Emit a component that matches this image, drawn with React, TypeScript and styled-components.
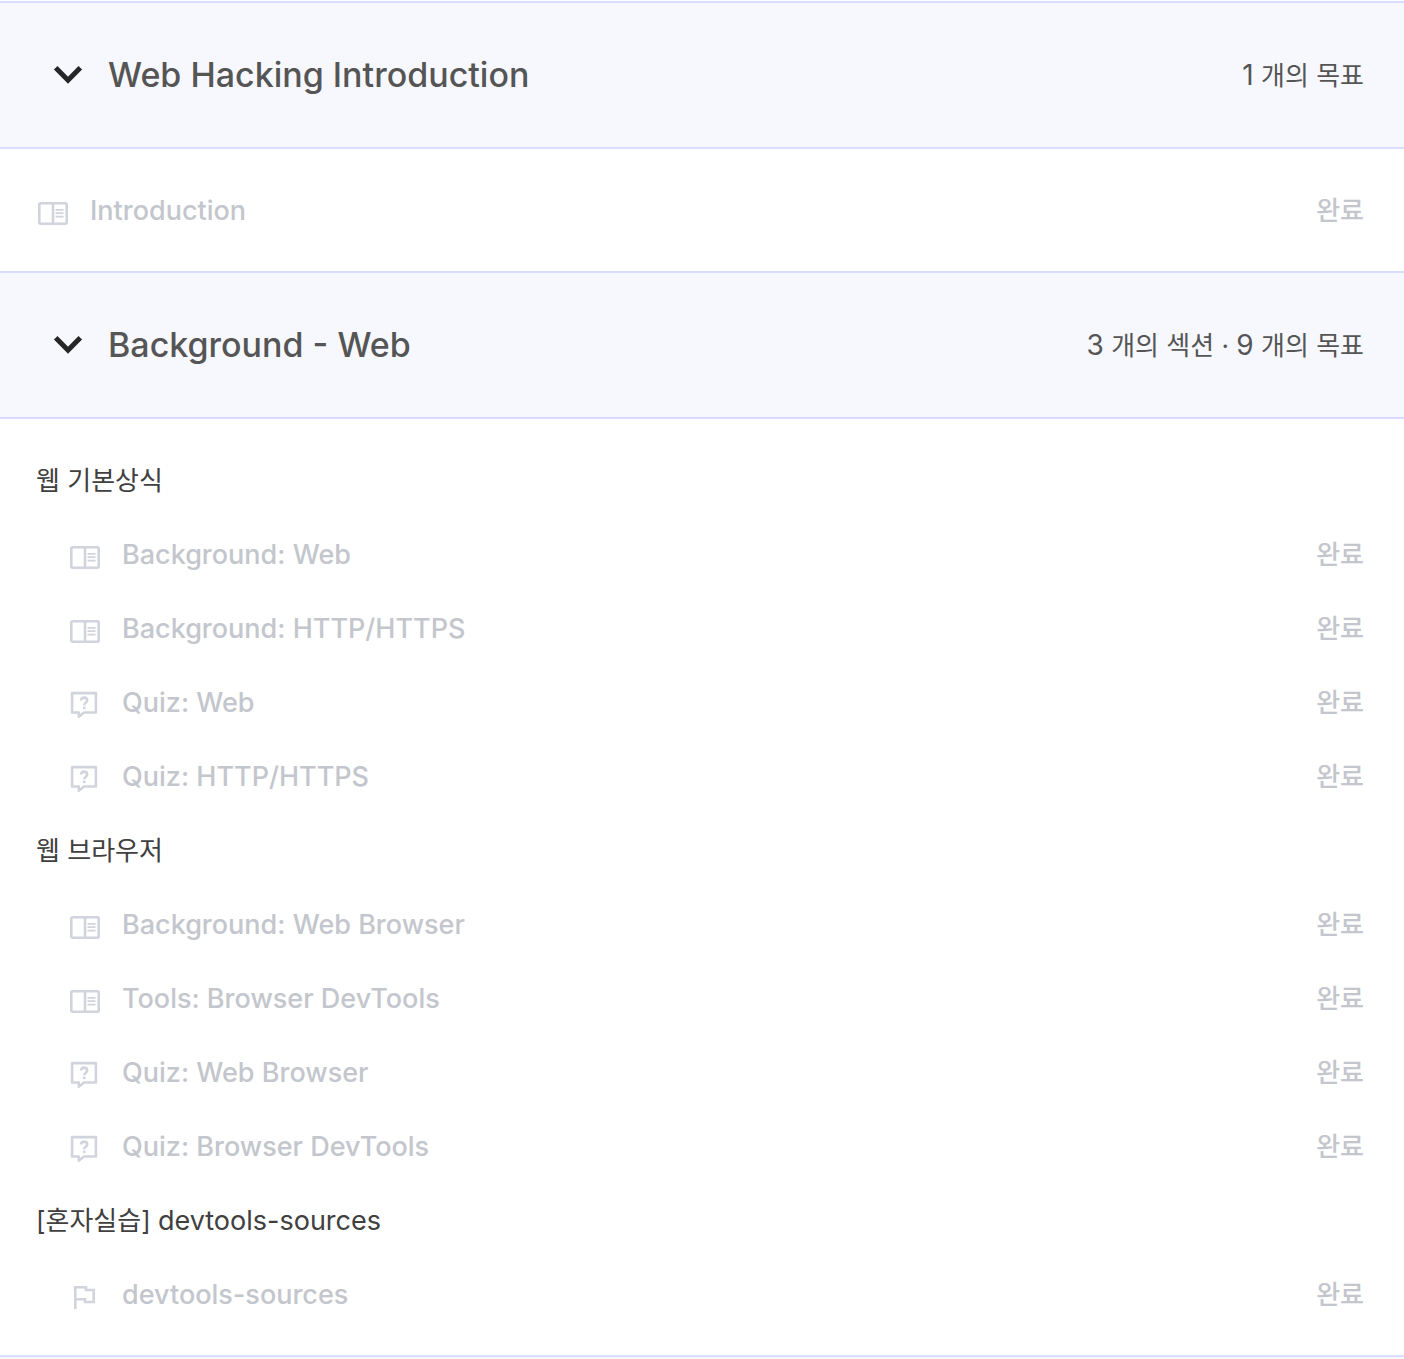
import React, { useState } from "react";
import styled, { createGlobalStyle } from "styled-components";

const GlobalStyle = createGlobalStyle`
  *, *::before, *::after { box-sizing: border-box; }
  body {
    margin: 0;
    background: #fff;
    font-family: Inter, "Noto Sans CJK KR", sans-serif;
  }
`;

const Curriculum = styled.main`
  padding-top: 1px;
`;

const Header = styled.button`
  display: flex;
  align-items: center;
  width: 100%;
  min-height: 148px;
  padding: 0 40px 0 48px;
  border: 0;
  border-top: 2px solid #d9dbff;
  border-bottom: 2px solid #d9dbff;
  background: #f7f8fe;
  color: #555;
  font-family: inherit;
  text-align: left;
  cursor: pointer;
`;

const Chevron = styled.svg<{ $open: boolean }>`
  flex: none;
  width: 40px;
  height: 40px;
  margin-right: 20px;
  transform: ${(p) => (p.$open ? "none" : "rotate(-90deg)")};
`;

const Title = styled.span`
  flex: 1;
  font-size: 34px;
  font-weight: 500;
  line-height: 44px;
`;

const Summary = styled.span`
  font-size: 26px;
  line-height: 40px;
  white-space: nowrap;
`;

const Latin = styled.span<{ $size: number }>`
  font-size: ${(p) => p.$size}px;
`;

const Body = styled.div`
  padding: 24px 40px 24px 36px;
`;

const GroupTitle = styled.h3`
  display: flex;
  align-items: center;
  height: 74px;
  margin: 0;
  padding-bottom: 4px;
  color: #404040;
  font-size: 26px;
  font-weight: 400;
  white-space: pre;
`;

const List = styled.ul<{ $nested?: boolean }>`
  margin: 0;
  padding: 0 0 0 ${(p) => (p.$nested ? 32 : 0)}px;
  list-style: none;
`;

const Row = styled.li`
  display: flex;
  align-items: center;
  justify-content: space-between;
  height: 74px;
  padding-top: 2px;
  color: #c3c6cc;
`;

const Lesson = styled.a`
  display: flex;
  align-items: center;
  gap: 22px;
  color: inherit;
  font-size: 27px;
  font-weight: 500;
  line-height: 40px;
  text-decoration: none;
`;

const Icon = styled.svg`
  flex: none;
  width: 32px;
  height: 32px;
  margin-top: 4px;
  color: #d1d4dc;
`;

const Status = styled.span`
  font-size: 26px;
  font-weight: 500;
  line-height: 40px;
`;

const NextSection = styled.div`
  height: 4px;
  border-top: 2px solid #d9dbff;
  background: #f7f8fe;
`;

type Kind = "lecture" | "quiz" | "challenge";

function KindIcon({ kind }: { kind: Kind }) {
  return (
    <Icon viewBox="0 0 32 32" fill="none" stroke="currentColor" strokeWidth="2.6" aria-hidden="true">
      {kind === "lecture" && (
        <>
          <rect x="3.3" y="6.3" width="27.4" height="20.4" rx="1.2" />
          <path d="M17 6v21" />
          <path d="M19.5 12.8h8M19.5 16.2h8M19.5 19.6h8" strokeWidth="1.8" />
        </>
      )}
      {kind === "quiz" && (
        <>
          <path d="M4.1 4.1h23.8v19.4h-11.9l-5.2 4.2v-4.2h-6.7z" strokeLinejoin="round" />
          <path d="M13 11.6c0-4 6.2-4 6.2 0 0 2.2-3 2.3-3 4.6" strokeWidth="2.6" />
          <path d="M14.9 18.9h2.6" strokeWidth="2.6" />
        </>
      )}
      {kind === "challenge" && <path d="M7.3 28V6.3h10.7v2.7h7.7v12h-8.7v-2.7H7.3" />}
    </Icon>
  );
}

interface Item { kind: Kind; name: string }
interface Group { title?: React.ReactNode; items: Item[] }

function Section({ title, summary, groups }: { title: string; summary: React.ReactNode; groups: Group[] }) {
  const [open, setOpen] = useState(true);
  return (
    <section>
      <Header type="button" aria-expanded={open} onClick={() => setOpen(!open)}>
        <Chevron $open={open} viewBox="0 0 40 40" fill="none" stroke="#262626" strokeWidth="5" aria-hidden="true">
          <path d="M7.7 12.7 20 25.2 32.3 12.7" />
        </Chevron>
        <Title>{title}</Title>
        <Summary>{summary}</Summary>
      </Header>
      {open && (
        <Body>
          {groups.map((group, i) => (
            <React.Fragment key={i}>
              {group.title && <GroupTitle>{group.title}</GroupTitle>}
              <List $nested={Boolean(group.title)}>
                {group.items.map((item) => (
                  <Row key={item.name}>
                    <Lesson href="#">
                      <KindIcon kind={item.kind} />
                      {item.name}
                    </Lesson>
                    <Status>완료</Status>
                  </Row>
                ))}
              </List>
            </React.Fragment>
          ))}
        </Body>
      )}
    </section>
  );
}

const webGroups: Group[] = [
  {
    title: "웹 기본상식",
    items: [
      { kind: "lecture", name: "Background: Web" },
      { kind: "lecture", name: "Background: HTTP/HTTPS" },
      { kind: "quiz", name: "Quiz: Web" },
      { kind: "quiz", name: "Quiz: HTTP/HTTPS" },
    ],
  },
  {
    title: "웹 브라우저",
    items: [
      { kind: "lecture", name: "Background: Web Browser" },
      { kind: "lecture", name: "Tools: Browser DevTools" },
      { kind: "quiz", name: "Quiz: Web Browser" },
      { kind: "quiz", name: "Quiz: Browser DevTools" },
    ],
  },
  {
    title: <span>[혼자실습] <Latin $size={27}>devtools-sources</Latin></span>,
    items: [{ kind: "challenge", name: "devtools-sources" }],
  },
];

export default function App() {
  return (
    <>
      <GlobalStyle />
      <Curriculum>
        <Section
          title="Web Hacking Introduction"
          summary={<><Latin $size={28}>1</Latin> 개의 목표</>}
          groups={[{ items: [{ kind: "lecture", name: "Introduction" }] }]}
        />
        <Section
          title="Background - Web"
          summary={<><Latin $size={28}>3</Latin> 개의 섹션 · <Latin $size={28}>9</Latin> 개의 목표</>}
          groups={webGroups}
        />
        <NextSection />
      </Curriculum>
    </>
  );
}
